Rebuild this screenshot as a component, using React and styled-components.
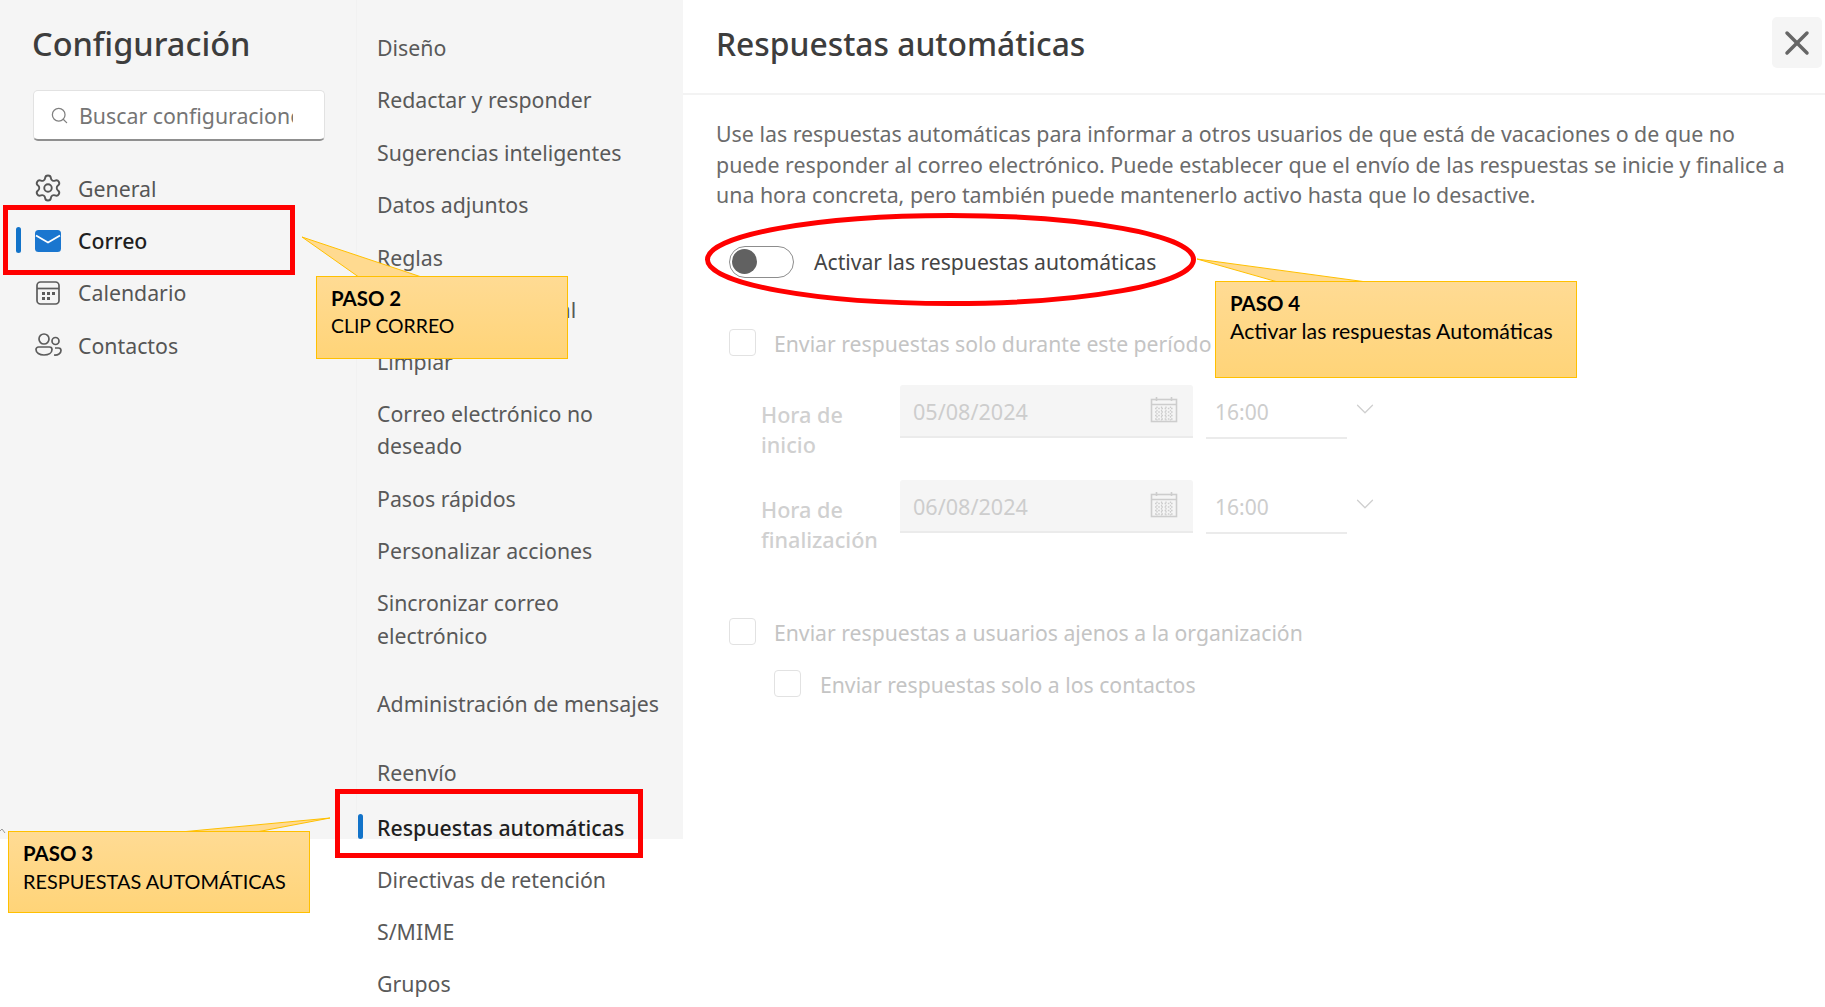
import React from 'react';
import styled, { createGlobalStyle } from 'styled-components';
import { Search, Settings, X, ChevronDown } from 'lucide-react';

const GlobalStyle = createGlobalStyle`
    html, body {
        margin: 0;
        padding: 0;
        background: #fff;
        overflow: hidden;
    }
    * {
        box-sizing: border-box;
    }
`

const Page = styled.div`
    position: relative;
    display: grid;
    grid-template-columns: 357px 326px 1142px;
    width: 1825px;
    height: 1007px;
    overflow: hidden;
    font-family: "Noto Sans", "Open Sans", sans-serif;
    background: #fff;
`

const Sidebar = styled.aside`
    background: #f5f5f5;
    height: 839px;
    padding: 20px 31px 0 33px;
    border-right: 1px solid #f1f1f1;
`

const SideTitle = styled.h1`
    margin: 0 0 0 -1px;
    height: 48px;
    line-height: 48px;
    font-size: 32.5px;
    font-weight: 500;
    color: #3d3d3d;
    white-space: nowrap;
`

const SearchBox = styled.div`
    display: flex;
    align-items: center;
    gap: 10px;
    margin-top: 22px;
    height: 51px;
    padding: 0 31px 0 16px;
    background: #fff;
    border: 1px solid #e2e2e2;
    border-bottom: 2px solid #8f8f8f;
    border-radius: 5px;
    color: #757575;
    font-size: 21.3px;
    svg {
        flex: none;
        color: #808080;
    }
`

const SearchText = styled.span`
    overflow: hidden;
    white-space: nowrap;
`

const MainNav = styled.nav`
    margin-top: 21px;
`

const MainItem = styled.div`
    position: relative;
    display: flex;
    align-items: center;
    gap: 15px;
    height: 52.4px;
    font-size: 21.3px;
    font-weight: ${p => (p.$active ? 500 : 400)};
    color: ${p => (p.$active ? '#1f1f1f' : '#555')};
    svg {
        flex: none;
    }
    ${p => p.$active && `
        &::before {
            content: '';
            position: absolute;
            left: -17px;
            top: 13px;
            width: 5px;
            height: 26px;
            border-radius: 3px;
            background: #1273c9;
        }
    `}
`

const SubNav = styled.nav`
    padding: 22px 0 0 20px;
    background: linear-gradient(#f5f5f5 839px, #fff 839px);
`

const SubItem = styled.div`
    position: relative;
    margin-top: ${p => p.$gap || 0}px;
    padding: 10px 0;
    line-height: 32.4px;
    font-size: 21.3px;
    font-weight: ${p => (p.$active ? 500 : 400)};
    color: ${p => (p.$active ? '#1f1f1f' : '#595959')};
    white-space: pre-line;
    ${p => p.$active && `
        &::before {
            content: '';
            position: absolute;
            left: -19px;
            top: 12px;
            width: 5px;
            height: 25px;
            border-radius: 3px;
            background: #1273c9;
        }
    `}
`

const Panel = styled.main`
    display: flex;
    flex-direction: column;
`

const PanelHeader = styled.header`
    display: flex;
    align-items: flex-start;
    justify-content: space-between;
    height: 95px;
    padding: 17px 3px 0 33px;
    border-bottom: 2px solid #f3f3f3;
`

const PanelTitle = styled.h2`
    margin: 3px 0 0;
    line-height: 48px;
    font-size: 31.8px;
    font-weight: 500;
    color: #3d3d3d;
`

const CloseButton = styled.button`
    display: flex;
    align-items: center;
    justify-content: center;
    width: 50px;
    height: 51px;
    padding: 0;
    border: 0;
    border-radius: 5px;
    background: #f5f5f5;
    color: #666;
`

const PanelBody = styled.div`
    padding: 24px 0 0 33px;
`

const Intro = styled.p`
    margin: 0;
    width: 1090px;
    line-height: 30.6px;
    font-size: 21.35px;
    color: #6b6b6b;
`

const ToggleRow = styled.div`
    display: flex;
    align-items: center;
    gap: 20px;
    height: 32px;
    margin: 35px 0 0 13px;
    font-size: 21.15px;
    color: #444;
`

const Toggle = styled.span`
    display: flex;
    align-items: center;
    width: 65px;
    height: 32px;
    padding-left: 2px;
    border: 1.5px solid #8d8d8d;
    border-radius: 16px;
    background: #fff;
    &::before {
        content: '';
        width: 25px;
        height: 25px;
        border-radius: 50%;
        background: #616161;
    }
`

const CheckRow = styled.div`
    display: flex;
    align-items: center;
    gap: ${p => p.$gap || 18}px;
    height: 28px;
    margin: ${p => p.$top}px 0 0 ${p => p.$left || 13}px;
    font-size: 21.2px;
    color: #c4c4c4;
    white-space: nowrap;
`

const CheckLabel = styled.span`
    padding-top: 2px;
`

const Checkbox = styled.span`
    flex: none;
    width: 27px;
    height: 27px;
    border: 1.5px solid #e2e2e2;
    border-radius: 4px;
    background: #fff;
`

const ScheduleRow = styled.div`
    display: flex;
    align-items: flex-start;
    height: 75px;
    margin: ${p => p.$top}px 0 0 45px;
`

const ScheduleLabel = styled.div`
    flex: none;
    width: 139px;
    margin-top: 15px;
    line-height: 30.5px;
    font-size: 21.6px;
    font-weight: 500;
    color: #d0d0d0;
`

const DateField = styled.div`
    display: flex;
    align-items: center;
    justify-content: space-between;
    flex: none;
    width: 293px;
    height: 53px;
    padding: 0 15px 0 13px;
    background: #f5f5f5;
    border-bottom: 2px solid #ebebeb;
    border-radius: 3px 3px 0 0;
    font-size: 21.6px;
    color: #cdcdcd;
`

const DateValue = styled.span`
    padding-top: 2px;
`

const TimeField = styled.div`
    display: flex;
    align-items: center;
    flex: none;
    width: 141px;
    height: 54px;
    margin-left: 13px;
    padding: 3px 0 0 9px;
    border-bottom: 2px solid #ebebeb;
    font-size: 21px;
    color: #cdcdcd;
`

const Chevron = styled.span`
    display: flex;
    margin: 9px 0 0 3px;
    color: #cfcfcf;
`

/* annotations laid over the screenshot */
const Overlay = styled.svg`
    position: absolute;
    left: 0;
    top: 0;
    width: 1825px;
    height: 1007px;
    pointer-events: none;
`

const RedBox = styled.div`
    position: absolute;
    left: ${p => p.$x}px;
    top: ${p => p.$y}px;
    width: ${p => p.$w}px;
    height: ${p => p.$h}px;
    border: 5px solid #ff0000;
`

const Callout = styled.div`
    position: absolute;
    left: ${p => p.$x}px;
    top: ${p => p.$y}px;
    width: ${p => p.$w}px;
    height: ${p => p.$h}px;
    padding: 8px 0 0 15px;
    font-family: "Lato", "Noto Sans", sans-serif;
    font-size: ${p => p.$size}px;
    line-height: 28px;
    color: #000;
    white-space: nowrap;
    background: linear-gradient(#ffdb94, #ffd478);
    box-shadow: inset 0 0 0 1px #ffc000;
`

const CalloutTitle = styled.div`
    font-weight: 700;
    font-size: 20.4px;
`

const GearIcon = () => <Settings size={30} strokeWidth={1.5} color="#555" />;

const MailIcon = () => (
    <svg width="30" height="30" viewBox="0 0 30 30">
        <rect x="2" y="4" width="26" height="22" rx="3.5" fill="#1a76cf" />
        <path d="M3 9.5 15 16.5 27 9.5" fill="none" stroke="#fff" strokeWidth="1.8" />
    </svg>
);

const CalendarIcon = () => (
    <svg width="30" height="30" viewBox="0 0 30 30" fill="none" stroke="#5c5c5c" strokeWidth="1.7">
        <rect x="4" y="4" width="22" height="22" rx="3.5" />
        <path d="M4 10.5h22" />
        <g fill="#5c5c5c" stroke="none">
            <rect x="9" y="14" width="3" height="3" />
            <rect x="14" y="14" width="3" height="3" />
            <rect x="19" y="14" width="3" height="3" />
            <rect x="9" y="19" width="3" height="3" />
            <rect x="14" y="19" width="3" height="3" />
        </g>
    </svg>
);

const ContactsIcon = () => (
    <svg width="30" height="30" viewBox="0 0 30 30" fill="none" stroke="#5c5c5c" strokeWidth="1.7">
        <circle cx="11" cy="9" r="5" />
        <circle cx="22.5" cy="11" r="3.5" />
        <path d="M3 19.5a2.5 2.5 0 0 1 2.5-2.5h11a2.5 2.5 0 0 1 2.5 2.5c0 3.5-3.5 5.5-8 5.5s-8-2-8-5.5Z" />
        <path d="M21 25c4 .4 7-1.5 7-4.5 0-1.5-1-2.5-2.5-2.5H22" />
    </svg>
);

const DateIcon = () => (
    <svg width="28" height="28" viewBox="0 0 28 28" fill="none" stroke="#cdcdcd" strokeWidth="1.6">
        <rect x="1.5" y="3.5" width="25" height="22" />
        <path d="M1.5 8.5h25M6.5 1v4M21.5 1v4" />
        <path d="M5 12.5h18M5 16h18M5 19.5h18M5 23h18M7 10.5v14M11.5 10.5v14M16 10.5v14M20.5 10.5v14" strokeWidth="1.3" strokeDasharray="1.6 1.6" />
    </svg>
);

const subItems = [
    { label: 'Diseño' },
    { label: 'Redactar y responder' },
    { label: 'Sugerencias inteligentes' },
    { label: 'Datos adjuntos' },
    { label: 'Reglas' },
    { label: 'Reenvío condicional' },
    { label: 'Limpiar' },
    { label: 'Correo electrónico no\ndeseado', gap: -1 },
    { label: 'Pasos rápidos' },
    { label: 'Personalizar acciones' },
    { label: 'Sincronizar correo\nelectrónico' },
    { label: 'Administración de mensajes', gap: 16 },
    { label: 'Reenvío', gap: 16 },
    { label: 'Respuestas automáticas', gap: 3, active: true },
    { label: 'Directivas de retención', gap: -1 },
    { label: 'S/MIME' },
    { label: 'Grupos' },
];

const Schedule = ({ top, label, date }) => (
    <ScheduleRow $top={top}>
        <ScheduleLabel>{label}</ScheduleLabel>
        <DateField>
            <DateValue>{date}</DateValue>
            <DateIcon />
        </DateField>
        <TimeField>16:00</TimeField>
        <Chevron><ChevronDown size={30} strokeWidth={1} /></Chevron>
    </ScheduleRow>
);

const App = () => {
    return (
        <Page>
            <GlobalStyle />
            <Sidebar>
                <SideTitle>Configuración</SideTitle>
                <SearchBox>
                    <Search size={19} strokeWidth={1.6} />
                    <SearchText>Buscar configuraciones</SearchText>
                </SearchBox>
                <MainNav>
                    <MainItem><GearIcon />General</MainItem>
                    <MainItem $active><MailIcon />Correo</MainItem>
                    <MainItem><CalendarIcon />Calendario</MainItem>
                    <MainItem><ContactsIcon />Contactos</MainItem>
                </MainNav>
            </Sidebar>

            <SubNav>
                {subItems.map(item => (
                    <SubItem key={item.label} $gap={item.gap} $active={item.active}>{item.label}</SubItem>
                ))}
            </SubNav>

            <Panel>
                <PanelHeader>
                    <PanelTitle>Respuestas automáticas</PanelTitle>
                    <CloseButton aria-label="Cerrar"><X size={40} strokeWidth={2.1} /></CloseButton>
                </PanelHeader>
                <PanelBody>
                    <Intro>
                        Use las respuestas automáticas para informar a otros usuarios de que está de vacaciones o de que no<br />
                        puede responder al correo electrónico. Puede establecer que el envío de las respuestas se inicie y finalice a<br />
                        una hora concreta, pero también puede mantenerlo activo hasta que lo desactive.
                    </Intro>
                    <ToggleRow><Toggle />Activar las respuestas automáticas</ToggleRow>
                    <CheckRow $top={51}><Checkbox /><CheckLabel>Enviar respuestas solo durante este período</CheckLabel></CheckRow>
                    <Schedule top={28} label="Hora de inicio" date="05/08/2024" />
                    <Schedule top={20} label="Hora de finalización" date="06/08/2024" />
                    <CheckRow $top={63}><Checkbox /><CheckLabel>Enviar respuestas a usuarios ajenos a la organización</CheckLabel></CheckRow>
                    <CheckRow $top={24} $left={58} $gap={19}><Checkbox /><CheckLabel>Enviar respuestas solo a los contactos</CheckLabel></CheckRow>
                </PanelBody>
            </Panel>

            <RedBox $x={3} $y={205} $w={292} $h={70} />
            <RedBox $x={335} $y={789} $w={308} $h={69} />

            <Overlay viewBox="0 0 1825 1007">
                <ellipse cx="950.5" cy="259.5" rx="243" ry="44" fill="none" stroke="#ff0000" strokeWidth="5" />
                <path d="M0 831 2 829 5 833" fill="none" stroke="#9a9a9a" strokeWidth="1" />
                <g fill="#ffda90" stroke="#ffc000" strokeWidth="1">
                    <path d="M358 276.5 302 237 420 276.5" />
                    <path d="M186 831.5 330 818 259 831.5" />
                    <path d="M1276 281.5 1197 259 1363 281.5" />
                </g>
            </Overlay>

            <Callout $x={316} $y={276} $w={252} $h={83} $size={19.4}>
                <CalloutTitle>PASO 2</CalloutTitle>
                CLIP CORREO
            </Callout>
            <Callout $x={8} $y={831} $w={302} $h={82} $size={19.9}>
                <CalloutTitle>PASO 3</CalloutTitle>
                RESPUESTAS AUTOMÁTICAS
            </Callout>
            <Callout $x={1215} $y={281} $w={362} $h={97} $size={21.3}>
                <CalloutTitle>PASO 4</CalloutTitle>
                Activar las respuestas Automáticas
            </Callout>
        </Page>
    );
}

export default App;
